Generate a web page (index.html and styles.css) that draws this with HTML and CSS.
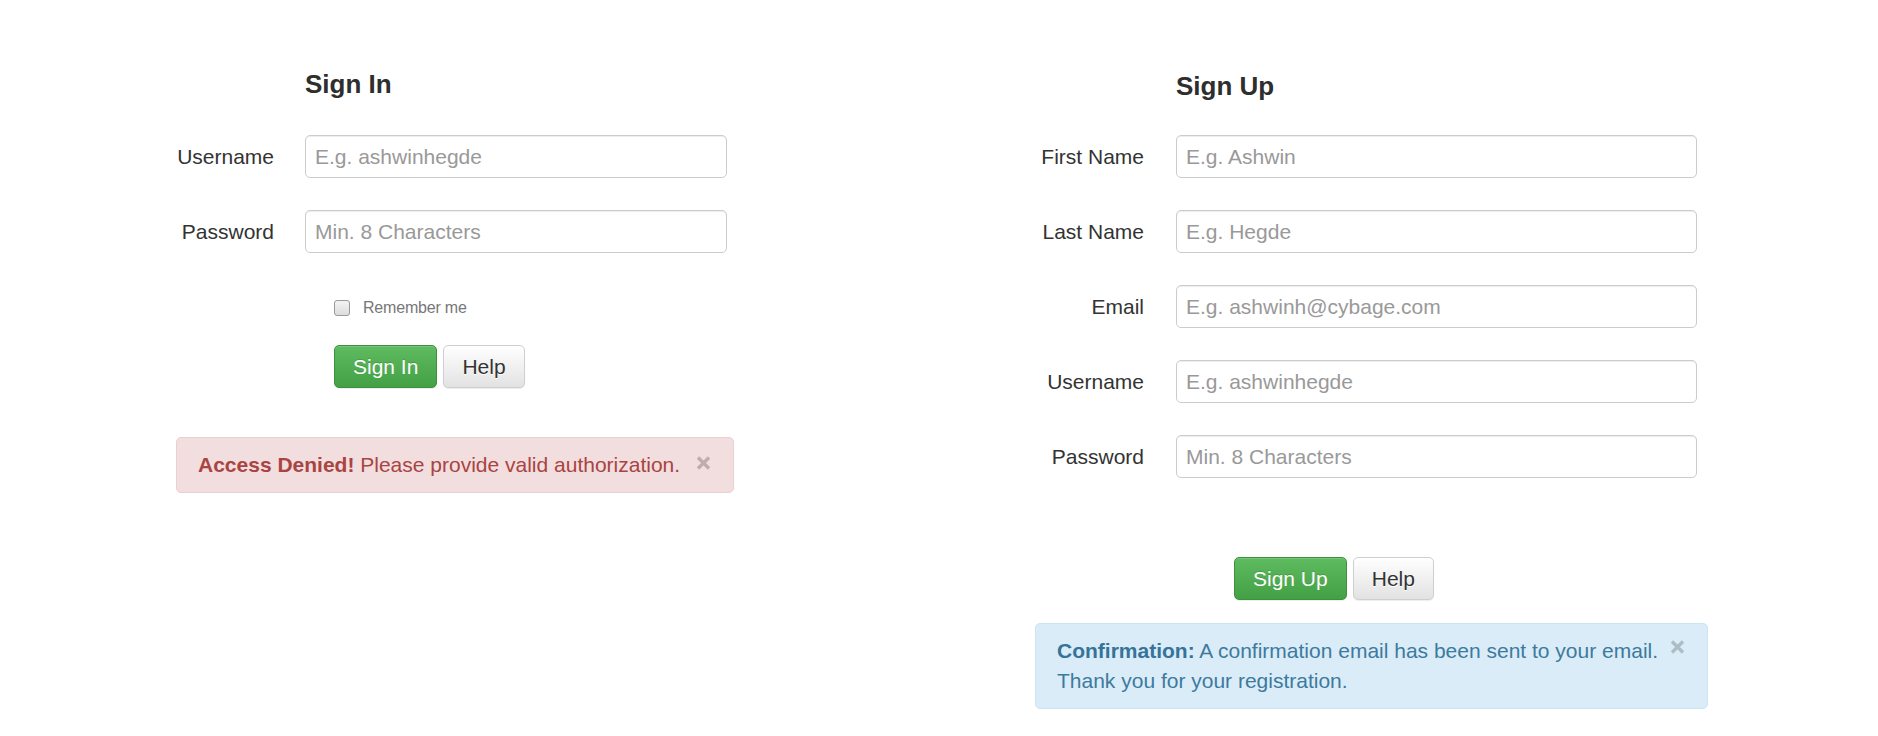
FILE: index.html
```html
<!DOCTYPE html>
<html lang="en">
<head>
<meta charset="utf-8">
<title>Sign In / Sign Up</title>
<link rel="stylesheet" href="styles.css">
</head>
<body>
<div class="page">
  <section class="panel signin">
    <h3 class="title">Sign In</h3>
    <div class="fields">
      <div class="form-row">
        <label class="label">Username</label>
        <input class="input" type="text" placeholder="E.g. ashwinhegde">
      </div>
      <div class="form-row">
        <label class="label">Password</label>
        <input class="input" type="password" placeholder="Min. 8 Characters">
      </div>
    </div>
    <label class="check">
      <input class="checkbox" type="checkbox">
      <span class="check-text">Remember me</span>
    </label>
    <div class="actions">
      <button class="btn btn-success">Sign In</button>
      <button class="btn btn-default">Help</button>
    </div>
    <div class="alert alert-danger">
      <strong>Access Denied!</strong> Please provide valid authorization.
      <svg class="close" width="15" height="14" viewBox="0 0 15 14"><path d="M2 1.5 L13 12.5 M13 1.5 L2 12.5" stroke="currentColor" stroke-width="3.4" fill="none"/></svg>
    </div>
  </section>

  <section class="panel signup">
    <h3 class="title">Sign Up</h3>
    <div class="fields">
      <div class="form-row">
        <label class="label">First Name</label>
        <input class="input" type="text" placeholder="E.g. Ashwin">
      </div>
      <div class="form-row">
        <label class="label">Last Name</label>
        <input class="input" type="text" placeholder="E.g. Hegde">
      </div>
      <div class="form-row">
        <label class="label">Email</label>
        <input class="input" type="text" placeholder="E.g. ashwinh@cybage.com">
      </div>
      <div class="form-row">
        <label class="label">Username</label>
        <input class="input" type="text" placeholder="E.g. ashwinhegde">
      </div>
      <div class="form-row">
        <label class="label">Password</label>
        <input class="input" type="password" placeholder="Min. 8 Characters">
      </div>
    </div>
    <div class="actions">
      <button class="btn btn-success">Sign Up</button>
      <button class="btn btn-default">Help</button>
    </div>
    <div class="alert alert-info">
      <strong>Confirmation:</strong> A confirmation email has been sent to your email.<br>Thank you for your registration.
      <svg class="close" width="15" height="14" viewBox="0 0 15 14"><path d="M2 1.5 L13 12.5 M13 1.5 L2 12.5" stroke="currentColor" stroke-width="3.4" fill="none"/></svg>
    </div>
  </section>
</div>
</body>
</html>
```

FILE: styles.css
```css
html, body {
  margin: 0;
  padding: 0;
  background: #fff;
}

body {
  font-family: "Liberation Sans", Arial, sans-serif;
  color: #333;
  font-size: 21px;
}

.page {
  display: flex;
  align-items: flex-start;
  padding-left: 176px;
  gap: 301px;
}

.panel {
  display: flex;
  flex-direction: column;
  align-items: flex-start;
}

.signin { width: 558px; }
.signup { width: 673px; }

.title {
  margin: 0;
  font-size: 26px;
  line-height: 30px;
  font-weight: bold;
  color: #2e2e2e;
}

.signin .title { margin: 69px 0 0 129px; }
.signup .title { margin: 71px 0 0 141px; }

.fields {
  display: flex;
  flex-direction: column;
  gap: 32px;
}

.signin .fields { margin-top: 36px; }
.signup .fields { margin-top: 34px; }

.form-row {
  display: grid;
  align-items: center;
}

.signin .form-row {
  grid-template-columns: 98px 422px;
  column-gap: 31px;
}

.signup .form-row {
  grid-template-columns: 109px 521px;
  column-gap: 32px;
}

.label {
  text-align: right;
  font-size: 21px;
  line-height: 24px;
  color: #333;
  white-space: nowrap;
}

.input {
  box-sizing: border-box;
  width: 100%;
  height: 43px;
  margin: 0;
  padding: 0 9px;
  border: 1px solid #ccc;
  border-radius: 5px;
  background: #fff;
  box-shadow: inset 0 1px 1px rgba(0, 0, 0, 0.075);
  font-family: "Liberation Sans", Arial, sans-serif;
  font-size: 21px;
  color: #555;
  outline: none;
}

.input::placeholder {
  color: #999;
  opacity: 1;
}

.check {
  display: flex;
  align-items: center;
  gap: 13px;
  height: 20px;
  margin: 45px 0 0 158px;
}

.checkbox {
  appearance: none;
  -webkit-appearance: none;
  box-sizing: border-box;
  width: 16px;
  height: 16px;
  margin: 0;
  border: 1px solid #9a9a9a;
  border-radius: 3px;
  background: linear-gradient(#f4f4f4, #dcdcdc);
}

.check-text {
  font-size: 16px;
  color: #777;
  letter-spacing: -0.2px;
}

.actions {
  display: flex;
  gap: 6px;
}

.signin .actions { margin: 27px 0 0 158px; }
.signup .actions { margin: 79px 0 0 199px; }

.btn {
  box-sizing: border-box;
  height: 43px;
  padding: 0 18px;
  border-radius: 5px;
  border: 1px solid #ccc;
  font-family: "Liberation Sans", Arial, sans-serif;
  font-size: 21px;
  line-height: 41px;
  cursor: pointer;
}

.btn-success {
  color: #fff;
  background: linear-gradient(#5fbb5f, #44a044);
  border-color: #3e8f3e;
  text-shadow: 0 -1px 0 rgba(0, 0, 0, 0.15);
  box-shadow: inset 0 1px 0 rgba(255, 255, 255, 0.15), 0 1px 1px rgba(0, 0, 0, 0.075);
}

.btn-default {
  color: #333;
  background: linear-gradient(#ffffff, #e2e2e2);
  border-color: #cfcfcf;
  text-shadow: 0 1px 0 #fff;
  box-shadow: inset 0 1px 0 rgba(255, 255, 255, 0.15), 0 1px 1px rgba(0, 0, 0, 0.075);
}

.alert {
  position: relative;
  box-sizing: border-box;
  width: 100%;
  padding: 12px 40px 12px 21px;
  border: 1px solid transparent;
  border-radius: 5px;
  font-size: 21px;
  line-height: 30px;
  white-space: nowrap;
}

.alert-danger {
  margin-top: 49px;
  color: #a94442;
  background: #f2dede;
  border-color: #ead0d3;
}

.alert-info {
  margin-top: 23px;
  color: #3d7a9e;
  background: #d9ecf7;
  border-color: #c9e5f1;
}

.alert-info strong { color: #35739a; }

.close {
  position: absolute;
  top: 18px;
  right: 22px;
  color: rgba(0, 0, 0, 0.22);
}

.alert-info .close { top: 16px; color: rgba(0, 0, 0, 0.2); }
```
